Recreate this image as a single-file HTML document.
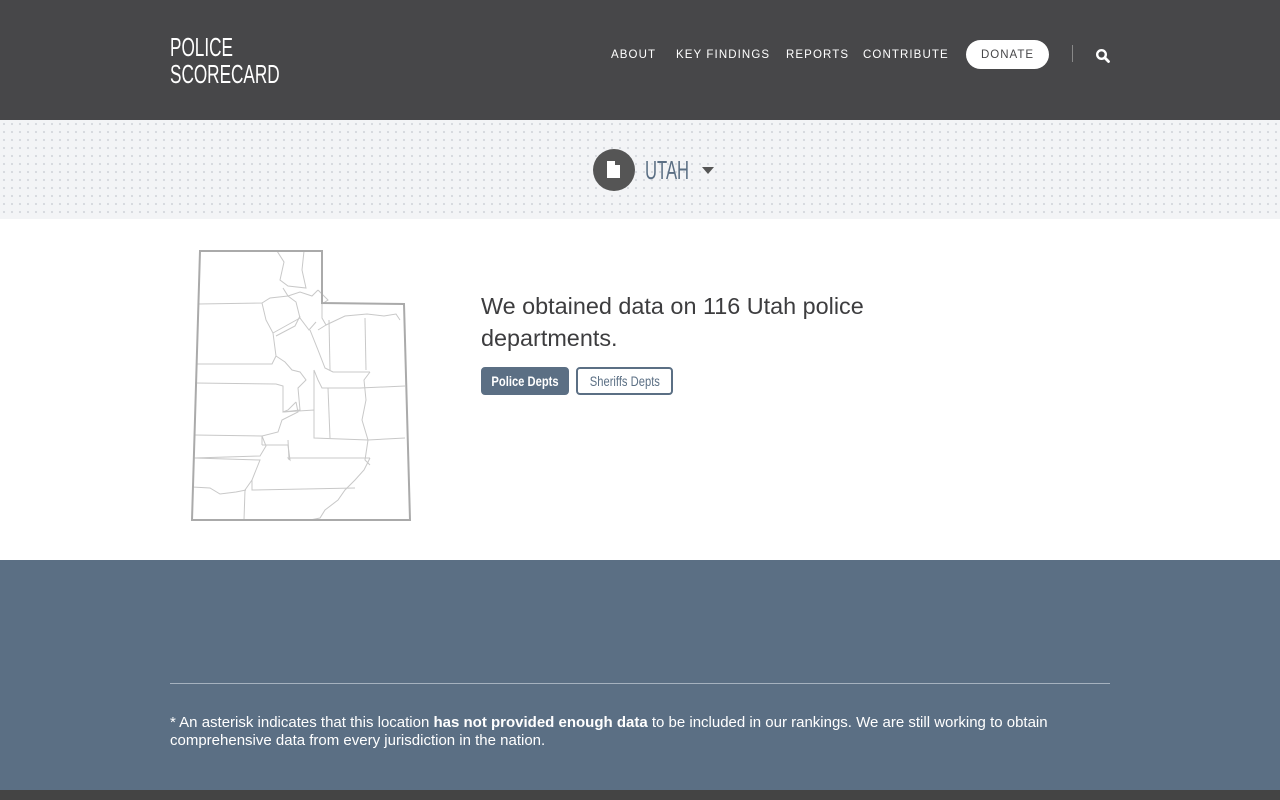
<!DOCTYPE html>
<html><head><meta charset="utf-8"><style>
*{margin:0;padding:0;box-sizing:border-box}
body{width:1280px;height:800px;overflow:hidden;font-family:"Liberation Sans",sans-serif;background:#fff}
.hdr{position:absolute;left:0;top:0;width:1280px;height:120px;background:#474749}
.logo{position:absolute;left:170px;top:34px;color:#fff;font-size:26px;line-height:27px;transform:scaleX(.66);transform-origin:left top;letter-spacing:0;white-space:nowrap}
.nav a{position:absolute;top:49px;color:#fff;font-size:11.5px;letter-spacing:1.1px;text-decoration:none}
.don{position:absolute;left:966px;top:40px;width:83px;height:29px;border-radius:15px;background:#fff;color:#474749;font-size:11.5px;letter-spacing:1px;text-align:center;line-height:30px}
.sep{position:absolute;left:1072px;top:45px;width:1px;height:17px;background:#888}
.band{position:absolute;left:0;top:120px;width:1280px;height:99px;background-color:#f3f4f6;background-image:radial-gradient(circle,#d6d9de 1px,transparent 1.3px);background-size:8px 8px}
.circ{position:absolute;left:593px;top:149px;width:42px;height:42px;border-radius:50%;background:#555}
.utah{position:absolute;left:645px;top:155px;font-size:26px;color:#5b6f84;transform:scaleX(.64);transform-origin:left top}
.tri{position:absolute;left:702px;top:167px;border-left:6px solid transparent;border-right:6px solid transparent;border-top:7px solid #555}
.h{position:absolute;left:481px;top:290px;font-size:23.4px;line-height:32px;color:#3d3d3f}
.b{position:absolute;top:367px;height:28px;border-radius:4px;border:2px solid #5b6f84;font-size:14px;line-height:24px;text-align:center;white-space:nowrap}
.b span{display:inline-block;transform:scaleX(.8)}
.foot{position:absolute;left:0;top:560px;width:1280px;height:230px;background:#5b6f84}
.line{position:absolute;left:170px;top:683px;width:940px;height:1px;background:#a6b2bf}
.ft{position:absolute;left:170px;top:714px;width:920px;font-size:15px;line-height:18px;color:#fff}
.bot{position:absolute;left:0;top:790px;width:1280px;height:10px;background:#444}
</style></head><body>
<div class="hdr">
<div class="logo">POLICE<br>SCORECARD</div>
<div class="nav"><a style="left:611px">ABOUT</a><a style="left:676px">KEY FINDINGS</a><a style="left:786px">REPORTS</a><a style="left:863px">CONTRIBUTE</a></div>
<div class="don">DONATE</div>
<div class="sep"></div>
<svg style="position:absolute;left:1095px;top:48px" width="16" height="16" viewBox="0 0 16 16"><circle cx="6.5" cy="6.5" r="4.3" fill="none" stroke="#fff" stroke-width="2.4"/><path d="M9.8 9.8L13.5 13.5" stroke="#fff" stroke-width="2.8" stroke-linecap="round"/></svg>
</div>
<div class="band"></div>
<div class="circ"><svg style="position:absolute;left:14px;top:12px" width="14" height="17" viewBox="0 0 14 17"><path d="M0 0H8V4H13V17H0Z" fill="#fff"/></svg></div>
<div class="utah">UTAH</div>
<div class="tri"></div>
<svg style="position:absolute;left:0;top:0" width="1280" height="560" fill="none">
<g stroke="#c8c8c8" stroke-width="1">
<path d="M198 304L262 303L270 298L288 296L300 292L312 296L318 290"/>
<path d="M277 251L284 262L280 280L288 286L306 288L302 270L304 251"/>
<path d="M283 288L288 296L296 302L300 318L309 330L316 322"/>
<path d="M262 303L266 320L273 333L276 356L272 364L196 364"/>
<path d="M273 333L300 318"/>
<path d="M318 290L328 300L322 304L322 318L326 325L318 330"/>
<path d="M276 336L295 326L300 316"/>
<path d="M310 330L318 350L325 368L333 372L370 372"/>
<path d="M326 325L345 316L367 314L384 316L396 314L400 320"/>
<path d="M329 320L330 370"/>
<path d="M365 318L366 370"/>
<path d="M276 356L285 362L292 370L300 372L306 380L298 388L300 410L283 412"/>
<path d="M195 383L276 384L283 386L283 412L288 410L296 402"/>
<path d="M314 370L314 438"/>
<path d="M314 370L318 380L322 388L360 388L405 386"/>
<path d="M370 372L364 380L366 400L362 420L368 440L365 460L370 465"/>
<path d="M296 402L298 412L282 420L278 432L262 436L262 445"/>
<path d="M283 412L314 410L314 438L368 440"/>
<path d="M194 435L262 436L266 446L260 456L194 458"/>
<path d="M262 445L288 445L290 460L288 458L370 458"/>
<path d="M288 440L289 460"/>
<path d="M370 458L364 470L355 480L345 490L338 500L325 510L320 518L310 520"/>
<path d="M194 458L260 460L256 470L252 480L245 490L244 520"/>
<path d="M252 480L252 490L355 488"/>
<path d="M192 487L210 488L220 494L236 492L246 490"/>
<path d="M328 388L330 438"/>
<path d="M405 438L368 440"/>
</g>
<path d="M200 251L322 251L322 303L404 304L410 520L192 520Z" stroke="#aaa" stroke-width="2"/>
</svg>
<div class="h">We obtained data on 116 Utah police<br>departments.</div>
<div class="b" style="left:481px;width:88px;background:#5b6f84;color:#fff;font-weight:bold"><span>Police Depts</span></div>
<div class="b" style="left:576px;width:97px;background:#fff;color:#5b6f84"><span>Sheriffs Depts</span></div>
<div class="foot"></div>
<div class="line"></div>
<div class="ft">* An asterisk indicates that this location <b>has not provided enough data</b> to be included in our rankings. We are still working to obtain comprehensive data from every jurisdiction in the nation.</div>
<div class="bot"></div>
</body></html>
